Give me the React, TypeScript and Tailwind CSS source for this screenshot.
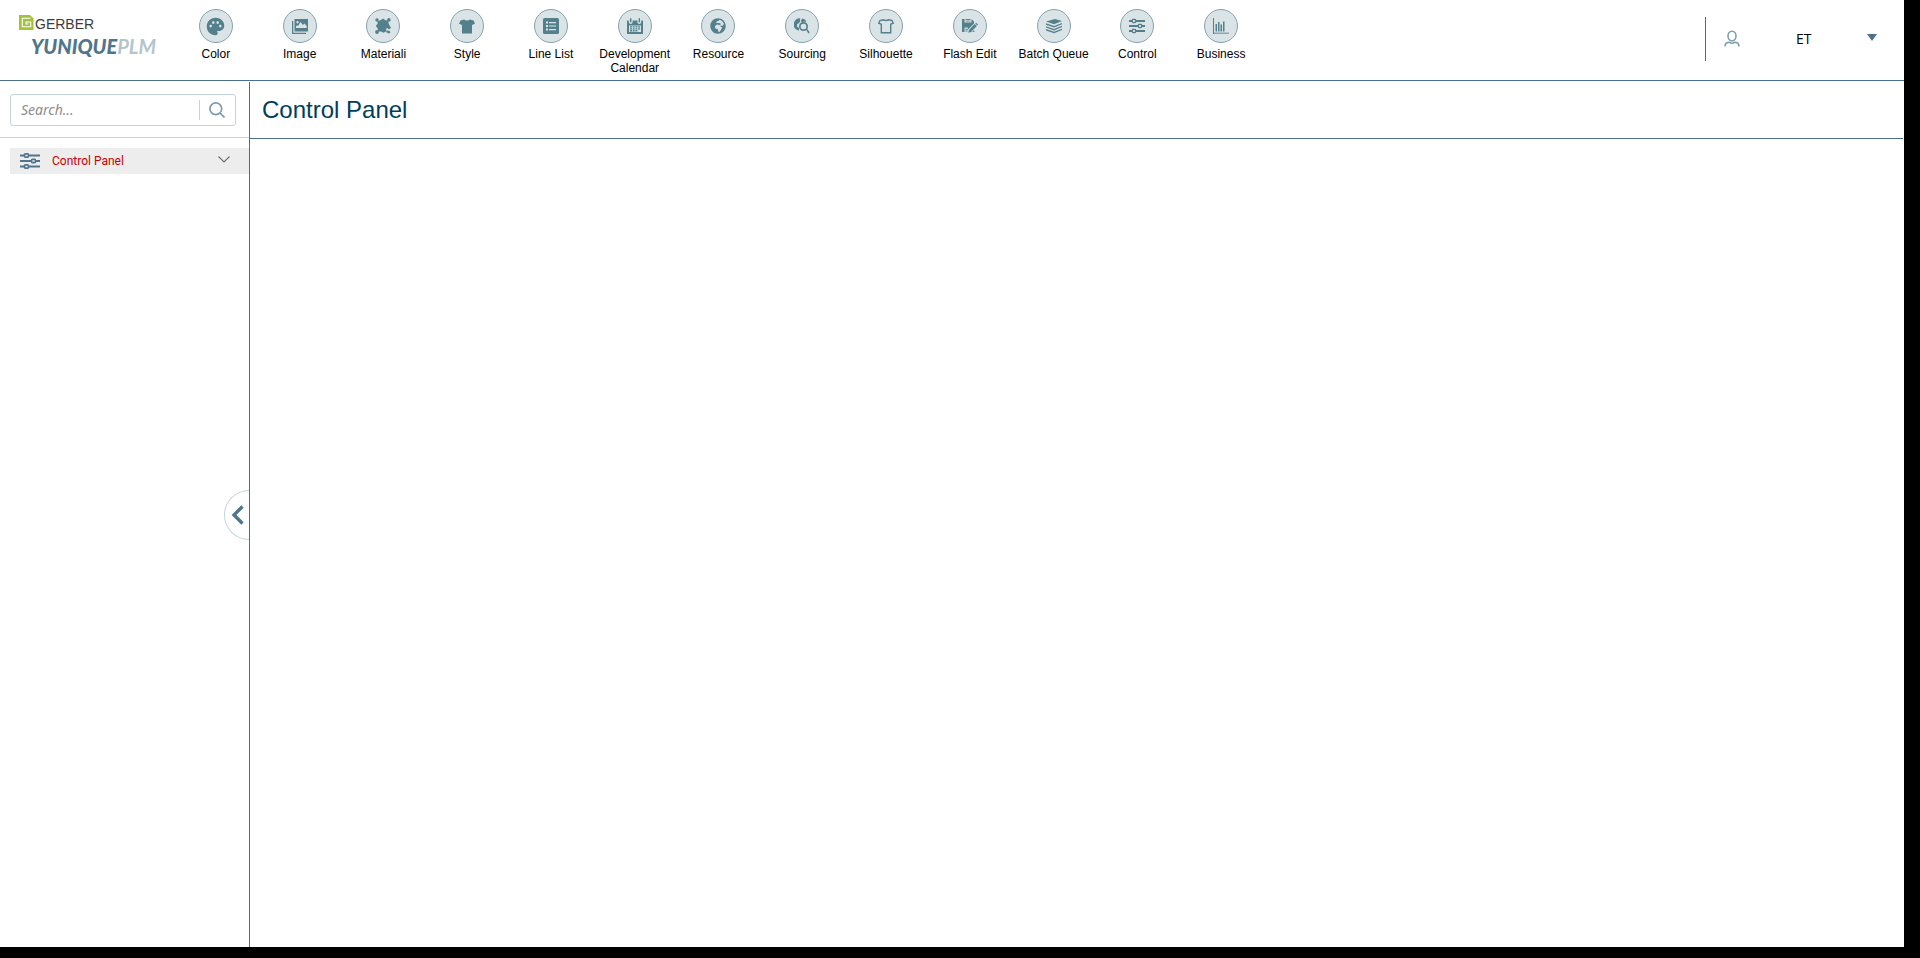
import React from "react";
import { MdPalette } from "react-icons/md";
import { FaGlobeAfrica } from "react-icons/fa";

function Glyph({ children, className = "size-4" }: { children: React.ReactNode; className?: string }) {
  return (
    <svg viewBox="0 0 16 16" className={className} fill="currentColor" aria-hidden="true">
      {children}
    </svg>
  );
}

function Sliders({ className }: { className?: string }) {
  return (
    <Glyph className={className}>
      <path d="M0 2h3v2H0zM7 2h9v2H7zM0 7h9v2H0zM13 7h3v2h-3zM0 12h3v2H0zM7 12h9v2H7z" />
      <g fill="none" stroke="currentColor" strokeWidth="1.3">
        <rect x="3.4" y="1.4" width="3.2" height="3.2" rx="0.8" />
        <rect x="9.4" y="6.4" width="3.2" height="3.2" rx="0.8" />
        <rect x="3.4" y="11.4" width="3.2" height="3.2" rx="0.8" />
      </g>
    </Glyph>
  );
}

const items: { label: string; icon: React.ReactNode }[] = [
  { label: "Color", icon: <MdPalette className="size-[21px]" /> },
  {
    label: "Image",
    icon: (
      <Glyph>
        <path d="M0 3h1.300v11.700H14V16H0z" />
        <path fillRule="evenodd" d="M2.500 1H16v12.500H2.500zM4 10h10.700V8L12.500 5.500 11 7 8.500 4 6 8 5 7.300 4 8.500zM5.500 3a1.200 1.200 0 1 0 .01 0z" />
      </Glyph>
    ),
  },
  {
    label: "Materiali",
    icon: (
      <Glyph>
        <path d="M8 .5 10.500 2.300 13 2.500 13.600 5 14 6.500 16 9.800 14 11.500 12.500 10 11 10.800 11.600 13 8.500 14.800 6 13.600 3 13.500 2.800 10.500.8 8 2.600 5.800 2.700 3 5.500 2.300z" />
        <circle cx="2" cy="2" r="1.700" />
        <circle cx="13.900" cy="1.900" r="1.800" />
        <circle cx="2" cy="14" r="1.900" />
        <path d="m12 12.500 2.800.6.500 1.700-1.600.7-2.700-1.500z" />
      </Glyph>
    ),
  },
  {
    label: "Style",
    icon: (
      <Glyph>
        <path d="M5 1.500c1.500 1.200 4.500 1.200 6 0L14.500 2.500 16 5.800 13 7v8.500H3V7L0 5.800 1.500 2.500z" />
      </Glyph>
    ),
  },
  {
    label: "Line List",
    icon: (
      <Glyph>
        <rect width="16" height="16" rx="1.500" />
        <path fill="#dae3e6" d="M3 3.500h2v2H3zM6 4h7v1.200H6zM3 7h2v2H3zM6 7.400h7v1.200H6zM3 10.500h2v2H3zM6 11h7v1.200H6z" />
      </Glyph>
    ),
  },
  {
    label: "Development Calendar",
    icon: (
      <Glyph>
        <path d="M0 2.500h1.800V4a1.900 1.900 0 0 0 3.800 0V2.500h4.800V4a1.900 1.900 0 0 0 3.800 0V2.500H16V16H0z" />
        <rect x="3" y="0" width="1.400" height="4.500" rx=".7" />
        <rect x="11.600" y="0" width="1.400" height="4.500" rx=".7" />
        <path fill="#dae3e6" d="M2 7.500h12v6.500H2z" />
        <path d="M3 8.300h2v1.300H3zM5.700 8.300h2v1.300h-2zM8.400 8.300h2v1.300h-2zM11.100 8.300h2v1.300h-2zM3 10.200h2v1.300H3zM5.700 10.200h2v1.300h-2zM8.400 10.200h2v1.300h-2zM11.100 10.200h2v1.300h-2zM3 12.100h2v1.300H3zM5.700 12.100h2v1.300h-2zM8.400 12.100h2v1.300h-2z" />
      </Glyph>
    ),
  },
  { label: "Resource", icon: <FaGlobeAfrica className="size-4" /> },
  {
    label: "Sourcing",
    icon: (
      <Glyph>
        <path d="M6.500.2A6.300 6.300 0 0 0 2.200 11.500L5 12.800V10L3 8.500 3.200 6 5 5.200 6.300 3 5.800 1.500zM8 .5l3 .9L12.500 4 10 3.500 8 4.500 7 3z" />
        <circle cx="9.500" cy="8.500" r="3.700" fill="#dae3e6" stroke="currentColor" strokeWidth="1.700" />
        <path d="m12 11.600 1-.8 2.700 3.500-1.300 1.200z" />
      </Glyph>
    ),
  },
  {
    label: "Silhouette",
    icon: (
      <Glyph>
        <path
          d="M5.200 1.700c1.500.9 4.100.9 5.600 0L14 2.500l1.200 2.700-2.500 1V14.800H3.300V6.200l-2.500-1L2 2.500z"
          fill="none"
          stroke="currentColor"
          strokeWidth="1.400"
        />
      </Glyph>
    ),
  },
  {
    label: "Flash Edit",
    icon: (
      <Glyph>
        <path d="M0 1h2.500v3.500h7V1L12 3.500v2L6 11.500v-2H2.500V14H0zM3.500 1h5v1H3.500zM3.500 2.700h5v.8h-5z" />
        <path d="M3.500 10.800H6v.9H3.500zM3.500 12.500h2v.9h-2zM6.300 14.800 7 12l5.700-5.900 2.100 2L9 14zM13.300 5.400l.8-.7L16 6.500l-.7.900zM10 14l2-1.800.5 1.800z" />
      </Glyph>
    ),
  },
  {
    label: "Batch Queue",
    icon: (
      <Glyph>
        <path d="M0 3.500 9 1l7 2-8 3.200z" />
        <path d="M0 5.300 8 8l8-3.100v1.300L8 9.500 0 6.700zM0 8.200l8 2.700 8-3.100v1.300l-8 3.300-8-2.800zM0 11.100l8 2.700 8-3.100V12l-8 3.300-8-2.800z" />
      </Glyph>
    ),
  },
  { label: "Control", icon: <Sliders className="size-4" /> },
  {
    label: "Business",
    icon: (
      <Glyph>
        <path d="M0 0h1v16H0z" />
        <path opacity=".6" d="M0 14.500h16V16H0z" />
        <path d="M2.500 6H4v7.500H2.500zM5 4h1.500v9.500H5zM7.500 6.500H9v7H7.500zM10 3.500h1.500v10H10z" />
      </Glyph>
    ),
  },
];

function Logo() {
  return (
    <a href="#" aria-label="Gerber YuniquePLM" className="block w-[174px] shrink-0 pl-[19px] pt-[14px]">
      <div className="flex items-start gap-px font-['Liberation_Sans'] text-[14px] leading-5 text-[#3c3c3c]">
        <svg viewBox="0 0 15 15" className="mt-px size-[15px]" aria-hidden="true">
          <path d="M0 0h11l3.500 3.500V15H0z" fill="#a3c23c" />
          <path d="M11.500 3.300H3.300v8.400h8.400V7H7v2h2.200" fill="none" stroke="#fff" strokeWidth="1.100" />
        </svg>
        <span>GERBER</span>
      </div>
      <div className="pl-3 font-['Lato','Liberation_Sans'] text-[20px] font-black italic leading-6 text-[#50758c]">
        YUNIQUE<span className="font-bold text-[#b3c5cd]">PLM</span>
      </div>
    </a>
  );
}

export default function App() {
  return (
    <div className="flex min-h-screen flex-col bg-black pb-[11px] pr-4 font-['Liberation_Sans',sans-serif]">
      <div className="flex flex-1 flex-col bg-white">
        <header className="flex h-[81px] border-b border-[#4c708b]">
          <Logo />
          <nav className="grid w-[1089px] shrink-0 grid-cols-13 pt-[9px]">
            {items.map((item) => (
              <a key={item.label} href="#" className="flex flex-col items-center gap-1 text-center text-[12px] leading-[14px] text-black">
                <span className="flex size-[34px] items-center justify-center rounded-full border border-[#87a1b3] bg-[#dae3e6] text-[#54808c]">
                  {item.icon}
                </span>
                {item.label}
              </a>
            ))}
          </nav>
          <div className="ml-auto mr-[27px] mt-[17px] flex h-11 w-[172px] items-center border-l border-[#437484] pl-[18px]">
            <svg viewBox="0 0 16 18" className="h-[18px] w-4 text-[#7f9fac]" fill="none" stroke="currentColor" strokeWidth="1.600" aria-hidden="true">
              <ellipse cx="8" cy="6" rx="4" ry="4.800" />
              <path d="M1 16.500c0-3 1.800-4.300 4.500-4.300 1.200 1.300 3.800 1.300 5 0 2.700 0 4.500 1.300 4.500 4.300" />
            </svg>
            <button type="button" className="ml-[56px] flex flex-1 items-center justify-between font-['Open_Sans'] text-[14px] leading-5 text-black">
              ET
              <svg viewBox="0 0 10 7" className="mb-1 h-[7px] w-[10px]" aria-hidden="true">
                <path d="M0 0h10L5 7z" fill="#4c708b" />
              </svg>
            </button>
          </div>
        </header>

        <div className="flex flex-1">
          <aside className="relative mt-px w-[250px] shrink-0 border-r border-[#4c708b] font-['Noto_Sans',sans-serif]">
            <div className="border-b border-[#c9d7de] pb-[11px] pl-[10px] pr-[13px] pt-3">
              <form className="flex h-8 items-center rounded-[3px] border border-[#c3d5dc]" onSubmit={(e) => e.preventDefault()}>
                <input
                  type="text"
                  aria-label="Search"
                  placeholder="Search..."
                  className="h-5 min-w-0 flex-1 border-r border-[#c3d5dc] pl-[10px] text-[14px] italic leading-5 outline-none placeholder:text-[#8c8c8c]"
                />
                <button type="submit" aria-label="Search" className="flex w-[35px] pl-[9px] text-[#7f9bb0]">
                  <svg viewBox="0 0 16 16" className="size-4" fill="none" stroke="currentColor" strokeWidth="1.700" aria-hidden="true">
                    <circle cx="6.800" cy="6.800" r="5.900" />
                    <path d="m11 11 4.500 4.500" />
                  </svg>
                </button>
              </form>
            </div>
            <button type="button" className="ml-[10px] mt-[10px] flex h-[26px] w-[239px] items-center bg-[#ededed] pl-[10px] pr-[19px] font-['Roboto'] text-[12px] text-[#cc0000]">
              <svg viewBox="0 0 20 16" className="h-4 w-5 text-[#50758c]" fill="currentColor" aria-hidden="true">
                <path d="M0 1.500h4v2H0zM9 1.500h11v2H9zM0 7h11v2H0zM16 7h4v2h-4zM0 12.500h4v2H0zM9 12.500h11v2H9z" />
                <g fill="none" stroke="currentColor" strokeWidth="1.700">
                  <rect x="4.500" y=".9" width="4" height="3.200" rx="1" />
                  <rect x="11.500" y="6.400" width="4" height="3.200" rx="1" />
                  <rect x="4.500" y="11.900" width="4" height="3.200" rx="1" />
                </g>
              </svg>
              <span className="ml-3">Control Panel</span>
              <svg viewBox="0 0 12 7" className="mb-1 ml-auto h-[7px] w-3" fill="none" stroke="#66717a" strokeWidth="1.100" aria-hidden="true">
                <path d="m.5.5 5.500 5.500L11.500.5" />
              </svg>
            </button>
            <button
              type="button"
              aria-label="Collapse sidebar"
              className="absolute right-0 top-1/2 flex h-[50px] w-[25px] -translate-y-1/2 items-center rounded-l-full border border-r-0 border-[#c3d5dc] bg-white pl-[6px]"
            >
              <svg viewBox="0 0 13 20" className="h-5 w-[13px]" fill="none" stroke="#50758c" strokeWidth="3.400" aria-hidden="true">
                <path d="M11.500 1.500 3 10l8.500 8.500" />
              </svg>
            </button>
          </aside>
          <main className="min-w-0 flex-1 pr-px">
            <h1 className="flex h-[58px] items-center border-b border-[#4c708b] pl-3 text-[24px] leading-7 text-[#003f59]">
              Control Panel
            </h1>
          </main>
        </div>
      </div>
    </div>
  );
}
